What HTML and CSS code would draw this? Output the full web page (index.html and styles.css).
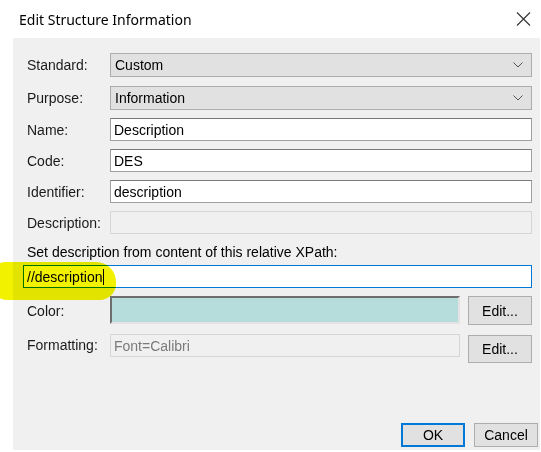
FILE: index.html
```html
<!DOCTYPE html>
<html lang="en">
<head>
    <meta charset="UTF-8">
    <meta name="viewport" content="width=device-width, initial-scale=1.0">
    <title>Edit Structure Information</title>
    <link rel="stylesheet" href="styles.css">
</head>
<body>
    <div class="dialog">
        <!-- Title bar -->
        <div class="titlebar">
            <span class="title">Edit Structure Information</span>
            <svg class="close" width="15" height="14" viewBox="0 0 15 14">
                <path d="M1 0.5 L14 13.5 M14 0.5 L1 13.5" stroke="#333" stroke-width="1.1" fill="none"/>
            </svg>
        </div>

        <!-- Form panel -->
        <div class="panel">
            <div class="row row-select">
                <span class="label">Standard:</span>
                <div class="select">
                    <span>Custom</span>
                    <svg class="chevron" width="10" height="6" viewBox="0 0 10 6"><path d="M0.5 0.5 L5 5 L9.5 0.5" stroke="#555" fill="none"/></svg>
                </div>
            </div>
            <div class="row row-select row-tight">
                <span class="label">Purpose:</span>
                <div class="select">
                    <span>Information</span>
                    <svg class="chevron" width="10" height="6" viewBox="0 0 10 6"><path d="M0.5 0.5 L5 5 L9.5 0.5" stroke="#555" fill="none"/></svg>
                </div>
            </div>
            <div class="row">
                <span class="label">Name:</span>
                <div class="textbox">Description</div>
            </div>
            <div class="row">
                <span class="label">Code:</span>
                <div class="textbox">DES</div>
            </div>
            <div class="row">
                <span class="label">Identifier:</span>
                <div class="textbox">description</div>
            </div>
            <div class="row">
                <span class="label">Description:</span>
                <div class="textbox disabled"></div>
            </div>

            <div class="xpath-label">Set description from content of this relative XPath:</div>
            <div class="textbox focused">//description<span class="caret"></span></div>

            <div class="row row-color">
                <span class="label">Color:</span>
                <div class="swatch"></div>
                <button class="btn">Edit...</button>
            </div>
            <div class="row row-format">
                <span class="label">Formatting:</span>
                <div class="textbox disabled grey-text">Font=Calibri</div>
                <button class="btn">Edit...</button>
            </div>

            <div class="actions">
                <button class="btn btn-default">OK</button>
                <button class="btn">Cancel</button>
            </div>
        </div>

        <!-- highlighter mark over the XPath field -->
        <div class="highlight"></div>
    </div>
</body>
</html>
```

FILE: styles.css
```css
body {
    margin: 0;
    background: #ffffff;
    font-family: "Liberation Sans", Arial, sans-serif;
    font-size: 14px;
    color: #000;
}

.dialog {
    position: relative;
    width: 541px;
    height: 452px;
    overflow: hidden;
}

.titlebar {
    height: 38px;
    display: flex;
    align-items: center;
    justify-content: space-between;
    padding: 0 10px 0 19px;
}

.title {
    font-family: "Noto Sans", sans-serif;
    font-size: 14px;
    color: #000;
    margin-top: 1px;
}

.panel {
    margin-left: 13px;
    margin-right: 1px;
    height: 412px;
    background: #f0f0f0;
    padding: 15px 8px 0 14px;
    box-sizing: border-box;
    display: flex;
    flex-direction: column;
}

.row {
    display: flex;
    align-items: center;
    height: 23px;
    margin-bottom: 8px;
    flex-shrink: 0;
}

.row-select {
    height: 24px;
    margin-bottom: 9px;
}

.row-tight {
    margin-bottom: 8px;
}

.label {
    width: 83px;
    flex-shrink: 0;
    color: #1a1a1a;
}

.select {
    flex: 1;
    height: 100%;
    box-sizing: border-box;
    background: #e1e1e1;
    border: 1px solid #adadad;
    display: flex;
    align-items: center;
    justify-content: space-between;
    padding: 0 8px 0 4px;
}

.textbox {
    flex: 1;
    height: 100%;
    box-sizing: border-box;
    background: #fff;
    border: 1px solid #a0a0a0;
    border-top-color: #7a7a7a;
    display: flex;
    align-items: center;
    padding: 0 3px;
}

.textbox.disabled {
    background: #f0f0f0;
    border-color: #d6d6d6;
}

.grey-text {
    color: #7a7a7a;
}

.xpath-label {
    margin: 2px 0 5px 0;
    height: 16px;
    flex-shrink: 0;
}

.textbox.focused {
    flex: none;
    height: 23px;
    margin-left: -4px;
    margin-bottom: 8px;
    border-color: #0078d7;
}

.caret {
    display: inline-block;
    width: 1px;
    height: 16px;
    background: #000;
    margin-left: 1px;
}

.row-color {
    height: 29px;
    margin-bottom: 9px;
}

.swatch {
    flex: 1;
    height: 28px;
    align-self: flex-start;
    box-sizing: border-box;
    background: #b6dcdc;
    border: 2px solid #e3e3e3;
    border-top-color: #6e6e6e;
    border-left-color: #6e6e6e;
}

.row-format {
    height: 29px;
    align-items: flex-start;
}

.row-format .label {
    line-height: 23px;
}

.row-format .textbox {
    height: 23px;
}

.btn {
    font-family: "Liberation Sans", Arial, sans-serif;
    font-size: 14px;
    color: #000;
    background: #e1e1e1;
    border: 1px solid #adadad;
    height: 29px;
    width: 64px;
    margin-left: 8px;
    padding: 0;
}

.row-format .btn {
    height: 28px;
    margin-top: 1px;
}

.actions {
    margin-top: auto;
    margin-bottom: 3px;
    margin-right: -6px;
    display: flex;
    justify-content: flex-end;
}

.actions .btn {
    height: 24px;
    width: 64px;
    margin-left: 9px;
}

.btn-default {
    border: 2px solid #0078d7;
}

.highlight {
    position: absolute;
    left: -12px;
    top: 262px;
    width: 128px;
    height: 38px;
    border-radius: 20px 22px 18px 22px;
    background: #f2f200;
    mix-blend-mode: multiply;
    filter: blur(0.6px);
}
```
